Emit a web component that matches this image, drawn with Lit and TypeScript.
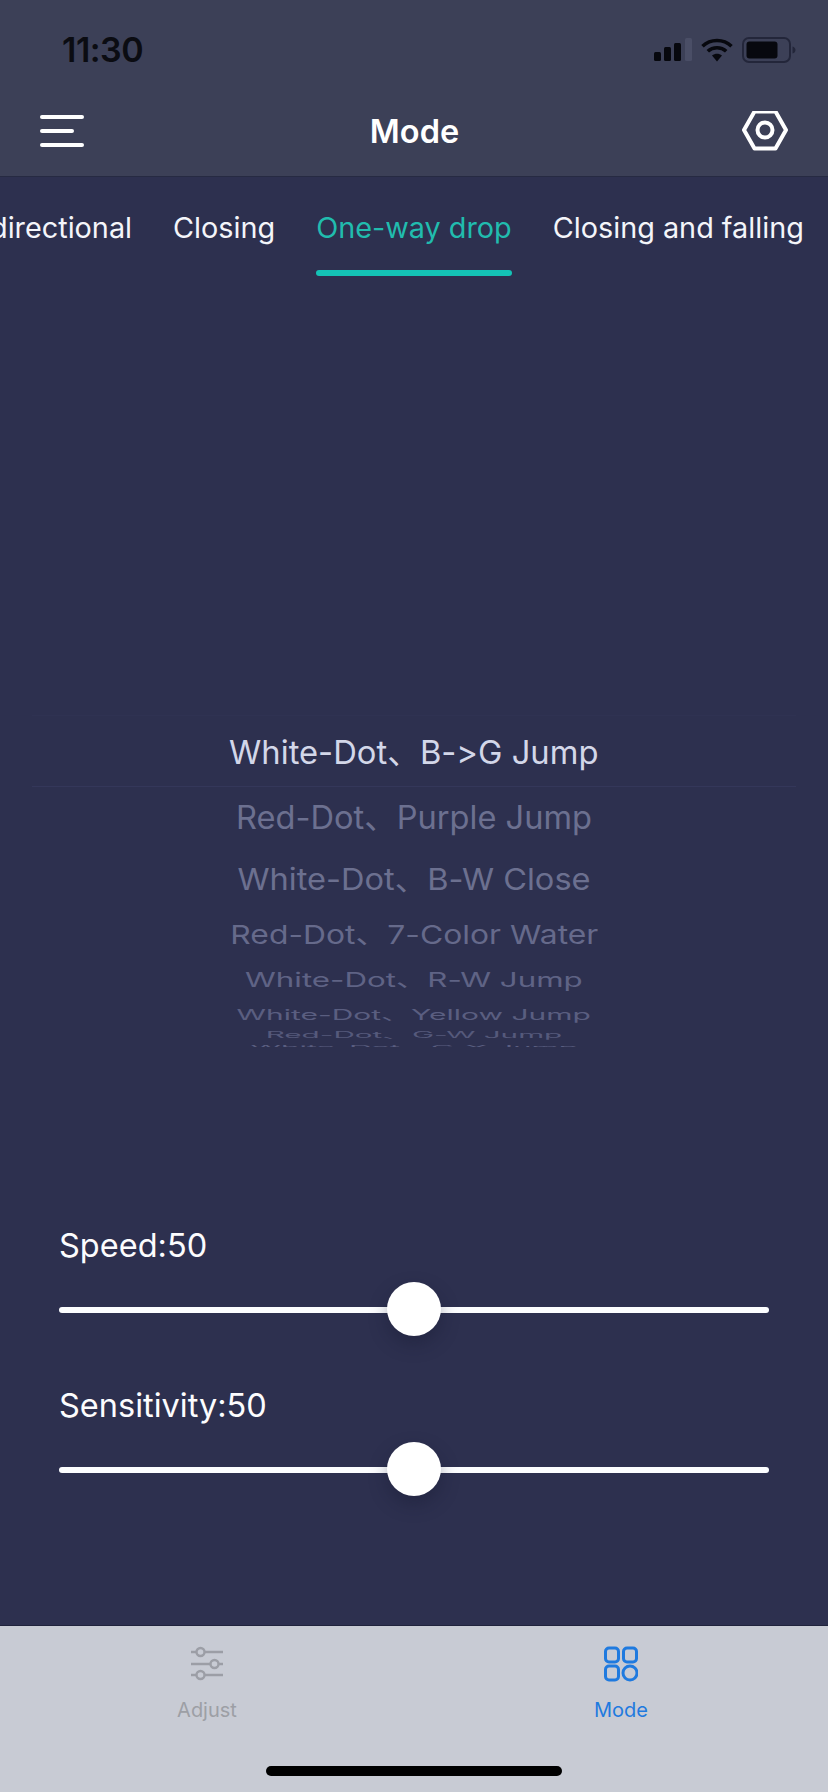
import { LitElement, html, css, svg } from 'lit';
import { customElement } from 'lit/decorators.js';

// wheel rows, squashed more the further they are from the selected one
const wheelRows = [
  { text: 'White-Dot、B->G Jump', h: 72, sy: 1, sx: 1.005, color: '#d3d7e9' },
  { text: 'Red-Dot、Purple Jump', h: 55, sy: 0.98, sx: 1, color: '#6c7090' },
  { text: 'White-Dot、B-W Close', h: 68, sy: 0.92, sx: 1, color: '#6c7090' },
  { text: 'Red-Dot、7-Color Water', h: 45, sy: 0.8, sx: 0.977, color: '#666a8b' },
  { text: 'White-Dot、R-W Jump', h: 47, sy: 0.62, sx: 0.96, color: '#5f6385' },
  { text: 'White-Dot、Yellow Jump', h: 22, sy: 0.44, sx: 0.92, color: '#5a5e80' },
  { text: 'Red-Dot、G-W Jump', h: 21, sy: 0.26, sx: 0.91, color: '#55597b' },
  { text: 'White-Dot、G-Y Jump', h: 6, sy: 0.16, sx: 0.95, color: '#5a5e80' },
];

const sliders = [
  { label: 'Speed', value: 50 },
  { label: 'Sensitivity', value: 50 },
];

@customElement('app-root')
export class AppRoot extends LitElement {
  static styles = css`
    :host {
      display: block;
      width: 828px;
      height: 1792px;
      font-family: Inter, 'Noto Sans CJK SC', sans-serif;
      font-variant-ligatures: none;
      font-feature-settings: 'calt' 0;
      background: #2d304f;
      color: #fff;
    }
    .page {
      height: 1792px;
      display: flex;
      flex-direction: column;
      overflow: hidden;
    }
    .head {
      height: 177px;
      flex: none;
      box-sizing: border-box;
      background: #3c4057;
      border-bottom: 1px solid #262a42;
    }
    .status {
      height: 88px;
      display: flex;
      align-items: center;
      justify-content: space-between;
      padding: 11px 32px 0 62px;
      box-sizing: border-box;
    }
    .time {
      font-size: 34px;
      font-weight: 600;
      color: #0b0c12;
      letter-spacing: -0.5px;
    }
    .status-icons {
      display: flex;
      align-items: center;
      gap: 9px;
    }
    .nav {
      height: 87px;
      display: grid;
      grid-template-columns: 1fr auto 1fr;
      align-items: center;
      padding: 2px 39px 0 40px;
      box-sizing: border-box;
      margin-top: -1px;
    }
    .nav .end {
      justify-self: end;
    }
    .title {
      font-size: 32.5px;
      font-weight: 600;
    }
    .tabs {
      display: flex;
      gap: 41px;
      margin-left: -10px;
      height: 92px;
      flex: none;
      white-space: nowrap;
      font-size: 28.8px;
    }
    .tab {
      padding-top: 33px;
      box-sizing: border-box;
      height: 100px;
      position: relative;
      color: #f4f5fa;
    }
    .tab.on {
      color: #21bcae;
    }
    .tab.on::after {
      content: '';
      position: absolute;
      left: 0;
      right: 0;
      top: 93px;
      height: 6px;
      border-radius: 3px;
      background: #14c2b6;
    }
    .wheel {
      margin-top: 444px;
      height: 334px;
      flex: none;
      overflow: hidden;
      position: relative;
    }
    .row {
      display: flex;
      align-items: center;
      justify-content: center;
      box-sizing: border-box;
      font-size: 32.6px;
      white-space: nowrap;
    }
    .row.first {
      border-top: 1px solid #2f3252;
      border-bottom: 1px solid #34375a;
      margin: 2px 32px 0;
      padding-bottom: 4px;
    }
    .row:last-child {
      margin-top: -2px;
    }
    .sliders {
      margin-top: 179px;
      padding: 0 59px;
      display: flex;
      flex-direction: column;
      gap: 73px;
    }
    .label {
      font-size: 32.5px;
      line-height: 40px;
      color: #fcfcfe;
    }
    .track {
      margin-top: 41px;
      height: 6px;
      border-radius: 3px;
      background: #fcfdff;
      position: relative;
    }
    .thumb {
      position: absolute;
      top: -25px;
      width: 54px;
      height: 54px;
      margin-left: -27px;
      border-radius: 50%;
      background: #fff;
      box-shadow: 0 8px 18px rgba(20, 22, 45, 0.35);
    }
    .tabbar {
      margin-top: auto;
      height: 167px;
      flex: none;
      background: #c8cbd4;
      border-top: 1px solid #20233c;
      box-sizing: border-box;
      display: grid;
      grid-template-columns: 1fr 1fr;
      position: relative;
    }
    .item {
      display: flex;
      flex-direction: column;
      align-items: center;
      padding-top: 20px;
      font-size: 20px;
      color: #9d9fa5;
    }
    .item.on {
      color: #1f7adf;
    }
    .item span {
      margin-top: 16px;
    }
    .home {
      position: absolute;
      left: 266px;
      top: 140px;
      width: 296px;
      height: 10px;
      border-radius: 5px;
      background: #000;
    }
  `;

  private signal() {
    return svg`<svg width="38" height="24" viewBox="0 0 38 24">
      <rect x="0" y="14" width="7" height="9" rx="1.5" fill="#07080e"/>
      <rect x="10" y="9" width="7" height="14" rx="1.5" fill="#07080e"/>
      <rect x="20" y="5" width="7" height="18" rx="1.5" fill="#07080e"/>
      <rect x="31" y="0" width="7" height="23" rx="1.5" fill="#4a4e66"/>
    </svg>`;
  }

  private wifi() {
    return svg`<svg width="32" height="24" viewBox="0 0 32 24" fill="none" stroke="#07080e" stroke-width="3.6">
      <path d="M1.5 8.2C9.5 .6 22.5 .6 30.5 8.2"/>
      <path d="M6.8 13.2C11.8 8.6 20.2 8.6 25.2 13.2"/>
      <path d="M11 17.6L16 23.4L21 17.6C18 15.2 14 15.2 11 17.6Z" fill="#07080e" stroke="none"/>
    </svg>`;
  }

  private battery() {
    return svg`<svg width="54" height="26" viewBox="0 0 54 26" fill="none">
      <rect x="1" y="1" width="47" height="24" rx="6" stroke="#23263a" stroke-width="2"/>
      <rect x="4.500" y="4.500" width="31" height="17" rx="3" fill="#07080e"/>
      <path d="M50.500 9.500C52.500 10 53.500 11.500 53.500 13C53.500 14.500 52.500 16 50.500 16.500Z" fill="#23263a"/>
    </svg>`;
  }

  private menu() {
    return svg`<svg width="44" height="34" viewBox="0 0 44 34" fill="#fff">
      <rect x="0" y="0" width="44" height="4" rx="2"/>
      <rect x="0" y="14" width="34" height="4" rx="2"/>
      <rect x="0" y="28" width="44" height="4" rx="2"/>
    </svg>`;
  }

  private hexNut() {
    return svg`<svg class="end" width="48" height="42" viewBox="0 2 48 42" fill="none" stroke="#fff" stroke-width="4">
      <path d="M13.500 2.500H34.500L45 21L34.500 39.500H13.500L3 21Z" stroke-linejoin="round"/>
      <circle cx="24" cy="21" r="7.500"/>
    </svg>`;
  }

  private adjustIcon() {
    return svg`<svg width="34" height="36" viewBox="0 -1 34 36" fill="none" stroke="#9c9ea6" stroke-width="2.400">
      <path d="M1 5H6M15 5H33M1 17H20M29 17H33M1 28H6M15 28H33"/>
      <circle cx="10.500" cy="5" r="4"/>
      <circle cx="24.500" cy="17" r="4"/>
      <circle cx="10.500" cy="28" r="4"/>
    </svg>`;
  }

  private modeIcon() {
    return svg`<svg width="34" height="36" viewBox="0 0 34 36" fill="none" stroke="#1f7adf" stroke-width="3">
      <rect x="1.500" y="2" width="13" height="14" rx="3.500"/>
      <rect x="19.500" y="2" width="13" height="14" rx="3.500"/>
      <rect x="1.500" y="20" width="13" height="14" rx="3.500"/>
      <circle cx="26" cy="27" r="7"/>
    </svg>`;
  }

  render() {
    return html`
      <div class="page">
        <div class="head">
          <div class="status">
            <div class="time">11:30</div>
            <div class="status-icons">${this.signal()}${this.wifi()}${this.battery()}</div>
          </div>
          <div class="nav">
            ${this.menu()}
            <div class="title">Mode</div>
            ${this.hexNut()}
          </div>
        </div>

        <div class="tabs">
          <div class="tab">directional</div>
          <div class="tab">Closing</div>
          <div class="tab on">One-way drop</div>
          <div class="tab">Closing and falling</div>
        </div>

        <div class="wheel">
          ${wheelRows.map(
            (r, i) => html`<div
              class="row ${i === 0 ? 'first' : ''}"
              style="height:${r.h}px;color:${r.color}"
            >
              <div style="transform:scale(${r.sx},${r.sy})">${r.text}</div>
            </div>`
          )}
        </div>

        <div class="sliders">
          ${sliders.map(
            (s) => html`<div>
              <div class="label">${s.label}:${s.value}</div>
              <div class="track"><div class="thumb" style="left:${s.value}%"></div></div>
            </div>`
          )}
        </div>

        <div class="tabbar">
          <div class="item">${this.adjustIcon()}<span>Adjust</span></div>
          <div class="item on">${this.modeIcon()}<span>Mode</span></div>
          <div class="home"></div>
        </div>
      </div>
    `;
  }
}
